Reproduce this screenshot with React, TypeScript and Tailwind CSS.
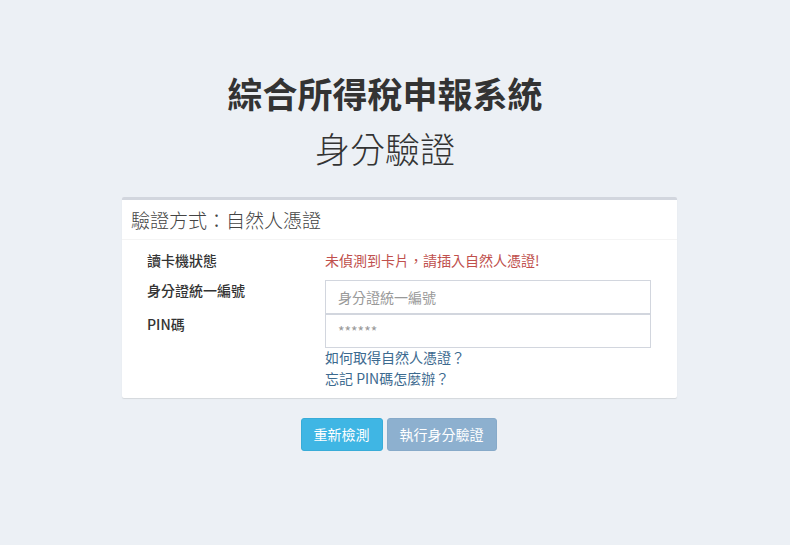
const font = { fontFamily: '"Noto Sans CJK TC", "Noto Sans", sans-serif' };

function FieldRow({ label, children }: { label: string; children: React.ReactNode }) {
  return (
    <div className="flex">
      <div className="w-[178px] text-[14px] leading-[20px] font-medium text-[#333]">{label}</div>
      <div className="w-[326px]">{children}</div>
    </div>
  );
}

export default function App() {
  return (
    <div className="min-h-[545px] w-[790px] bg-[#ecf0f5] pt-[72px]" style={font}>
      <div className="flex flex-col items-center pr-[20px]">
        <h1 className="text-[35px] leading-[42px] font-semibold text-[#333]">綜合所得稅申報系統</h1>
        <h2 className="mt-[13px] text-[35px] leading-[42px] font-light text-[#333]">身分驗證</h2>
      </div>

      <div className="ml-[122px] mt-[28px] w-[555px]">
        <div className="rounded-[2px] border-t-[3px] border-[#d2d6de] bg-white shadow-[0_1px_1px_rgba(0,0,0,0.1)]">
          <div className="h-[40px] border-b border-[#f4f4f4] px-[9px] pt-[8px] text-[19px] leading-[24px] font-light text-[#444]">
            驗證方式：自然人憑證
          </div>
          <div className="pl-[25px] pt-[10px] pb-[9px]">
            <div className="h-[30px]">
              <FieldRow label="讀卡機狀態">
                <div className="text-[14px] leading-[20px] text-[#c0504d]">未偵測到卡片，請插入自然人憑證!</div>
              </FieldRow>
            </div>
            <FieldRow label="身分證統一編號">
              <input
                placeholder="身分證統一編號"
                className="block h-[34px] w-full border border-[#d2d6de] px-[12px] text-[14px] placeholder:text-[#999] outline-none"
              />
            </FieldRow>
            <FieldRow label="PIN碼">
              <input
                type="password"
                placeholder="******"
                className="block h-[34px] w-full border border-[#d2d6de] px-[12px] text-[14px] placeholder:text-[#999] outline-none"
              />
            </FieldRow>
            <div className="ml-[178px] mt-[-1px] flex flex-col text-[14px] leading-[20px] text-[#3c6a8f]">
              <a href="#" className="block h-[21px]">如何取得自然人憑證？</a>
              <a href="#" className="block h-[21px]">忘記 PIN碼怎麼辦？</a>
            </div>
          </div>
        </div>

        <div className="mt-[20px] flex justify-center gap-[4px] pr-[2px]">
          <button className="h-[33px] rounded-[3px] border border-[#38acd8] bg-[#3fb6e4] px-[12px] text-[14px] text-white">
            重新檢測
          </button>
          <button disabled className="h-[33px] rounded-[3px] border border-[#87aac9] bg-[#8db0cf] px-[12px] text-[14px] text-white">
            執行身分驗證
          </button>
        </div>
      </div>
    </div>
  );
}
